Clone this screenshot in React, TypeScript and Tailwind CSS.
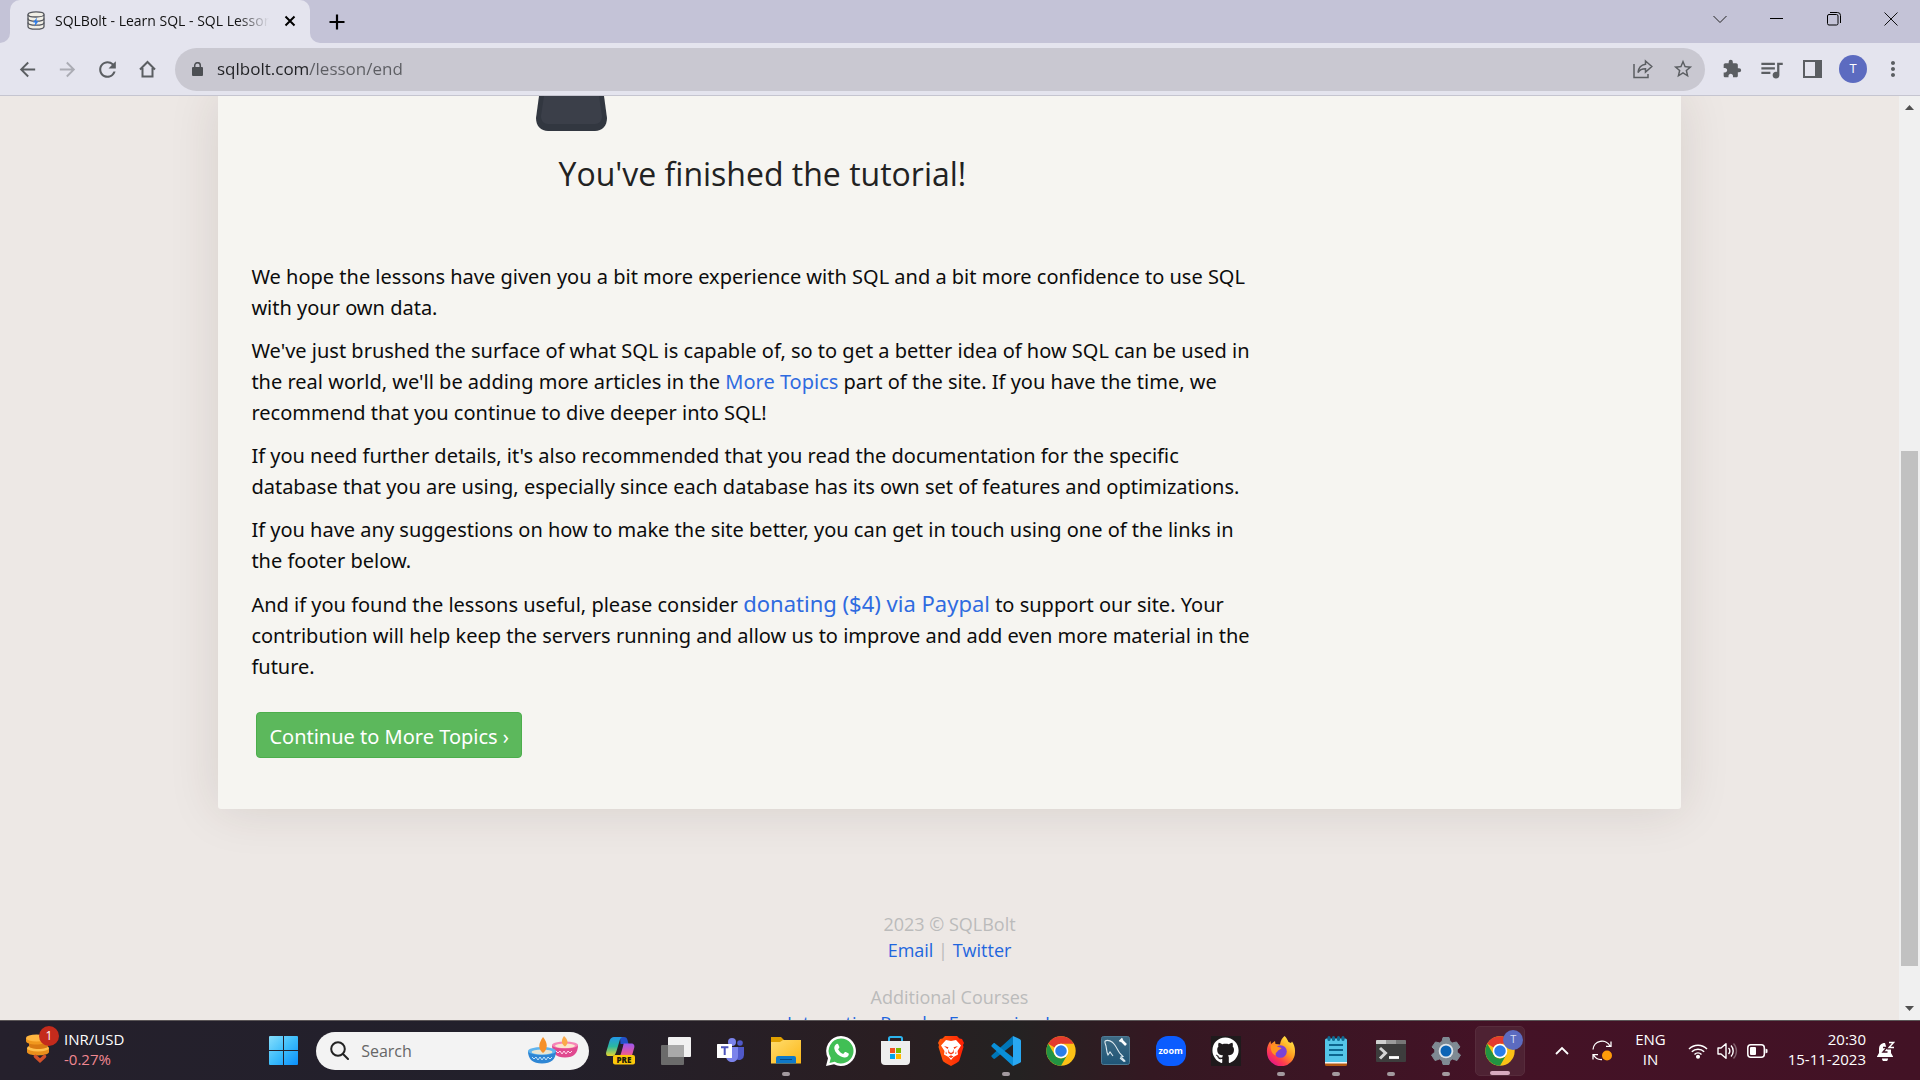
import React from "react";
import { MdArrowBack, MdArrowForward, MdRefresh, MdStarBorder, MdExtension, MdQueueMusic, MdMoreVert } from "react-icons/md";
import { FaGithub } from "react-icons/fa";

function DatabaseIcon() {
  return (
    <svg width="18" height="19" viewBox="0 0 18 19" fill="#f1efe6" stroke="#55575e" strokeWidth="1.3">
      <path d="M1 3.5v12c0 1.5 3.5 2.7 8 2.7s8-1.2 8-2.7v-12" />
      <ellipse cx="9" cy="3.4" rx="8" ry="2.6" />
      <path d="M1 7.5c0 1.5 3.5 2.7 8 2.7s8-1.2 8-2.7M1 11.5c0 1.5 3.5 2.7 8 2.7s8-1.2 8-2.7" fill="none" />
      <path d="M10 6.500l-4 5h2.300l-.8 4 4-5.300H9.300z" fill="#2a7bea" stroke="none" />
    </svg>
  );
}

function ChromeLogo() {
  return (
    <svg width="30" height="30" viewBox="0 0 48 48">
      <circle cx="24" cy="24" r="23.5" fill="#fbc116" />
      <path d="M3.6 12.3A23.5 23.5 0 0 1 44.4 12.3H24a11.7 11.7 0 0 0-10.2 5.9z" fill="#e33b2e" />
      <path d="M3.6 12.3A23.5 23.5 0 0 0 24 47.5l10.2-17.6A11.7 11.7 0 0 1 13.8 29.9z" fill="#229342" />
      <circle cx="24" cy="24" r="11.7" fill="#fff" />
      <circle cx="24" cy="24" r="9.2" fill="#2b7de9" />
    </svg>
  );
}

function CoinsIcon() {
  return (
    <svg width="24" height="30" viewBox="0 0 24 30">
      <path d="M1 14v4c0 2 5 3.4 11 3.4S23 20 23 18v-4z" fill="#e9901b" />
      <ellipse cx="12" cy="14" rx="11" ry="3.6" fill="#ffc04d" />
      <path d="M3 9v3c0 1.600 4 3 9.500 3S22 13.600 22 12V9z" fill="#d97a12" />
      <path d="M0 4v3c0 2 4 3.500 10 3.500S21 9 21 7V4z" fill="#f0981e" />
      <ellipse cx="10.500" cy="4" rx="10.500" ry="3.400" fill="#ffb640" />
      <path d="M9.500 22.500l4.500 4 4.500-4" fill="none" stroke="#d2502a" strokeWidth="3.600" strokeLinecap="round" />
    </svg>
  );
}

function StartIcon() {
  return (
    <svg width="29" height="29" viewBox="0 0 29 29">
      <defs>
        <linearGradient id="win" x1="0" y1="0" x2="1" y2="1">
          <stop offset="0" stopColor="#86defc" />
          <stop offset="0.500" stopColor="#3dbdfb" />
          <stop offset="1" stopColor="#0a8ffb" />
        </linearGradient>
      </defs>
      <path d="M1 0h13v14H0V1a1 1 0 0 1 1-1zM15 0h13a1 1 0 0 1 1 1v13H15zM0 15h14v14H1a1 1 0 0 1-1-1zM15 15h14v13a1 1 0 0 1-1 1H15z" fill="url(#win)" />
    </svg>
  );
}

function DiyaIcon() {
  return (
    <svg width="50" height="29" viewBox="0 0 50 29">
      <path d="M24 9c0 8 4 12.500 13 12.500S50 17 50 9z" fill="#e0488f" />
      <ellipse cx="37" cy="9" rx="13" ry="3.500" fill="#f685b8" />
      <ellipse cx="37" cy="9.800" rx="10" ry="2.300" fill="#fbe6cf" />
      <path d="M36 0c4.500 4 4.500 8 1 10.500C33 8 33 4 36 0z" fill="#fbaa4a" />
      <path d="M28 15l2 2 2-2 2 3 2-3 2 3 2-3 2 2 2-2" fill="none" stroke="#ffd5ea" />
      <path d="M0 15c0 8.500 5 12.500 14 12.500S28 23.500 28 15z" fill="#2e86d4" />
      <ellipse cx="14" cy="15" rx="14" ry="4" fill="#5fb4ee" />
      <ellipse cx="14" cy="16" rx="10.500" ry="2.600" fill="#e7e5d3" />
      <path d="M15 1c5 6 5 12 0 16-5-4-5-9 0-16z" fill="#f5902a" />
      <path d="M4 21l2 2 2-2 2 3 2-3 2 3 2-3 2 3 2-3 2 2 2-2" fill="none" stroke="#bfe1fa" />
    </svg>
  );
}

function CopilotIcon() {
  return (
    <svg width="30" height="28" viewBox="0 0 30 28">
      <defs>
        <linearGradient id="cpA" x1="0" y1="0" x2="0" y2="1">
          <stop offset="0" stopColor="#2397e8" /><stop offset="0.500" stopColor="#2bb8a0" /><stop offset="1" stopColor="#e6d42c" />
        </linearGradient>
        <linearGradient id="cpB" x1="0" y1="0" x2="0" y2="1">
          <stop offset="0" stopColor="#9a58f0" /><stop offset="0.600" stopColor="#e256a5" /><stop offset="1" stopColor="#f77b58" />
        </linearGradient>
      </defs>
      <path d="M14 0h4c2 0 3 1 3.500 3l1 4h-8z" fill="#2350c8" />
      <path d="M8 0h9c-2 0-3 2-3.500 4l-3 10c-1 3-2 5-4 5H3c-3 0-3.500-2-2.500-5l3-10C4.500 1 6 0 8 0z" fill="url(#cpA)" />
      <path d="M18 6.500h7c3 0 4 2 3 5l-2 7-3 3H11c2 0 3-2 4-5l2-7c.3-1.500.5-3 1-3z" fill="url(#cpB)" />
      <rect x="7" y="18" width="22" height="9.500" rx="2" fill="#fdc80a" />
      <text x="18" y="26" fontSize="8" fontWeight="800" textAnchor="middle" fill="#20180a" fontFamily="Open Sans">PRE</text>
    </svg>
  );
}

function TaskViewIcon() {
  return (
    <svg width="30" height="28" viewBox="0 0 30 28">
      <rect x="7" y="0" width="23" height="20" rx="1" fill="#f1f1f1" />
      <rect x="0" y="8" width="23" height="20" rx="1" fill="#6b6b6b" />
      <rect x="7" y="8" width="16" height="12" fill="#a9a9a9" />
    </svg>
  );
}

function TeamsIcon() {
  return (
    <svg width="28" height="26" viewBox="0 0 28 26">
      <circle cx="23" cy="5" r="2.800" fill="#5059c9" />
      <circle cx="15" cy="4" r="4" fill="#7b83eb" />
      <path d="M18 9h9v8a5 5 0 0 1-8 4z" fill="#5059c9" />
      <path d="M9 9h12v9c0 4-3 6-6 6s-6-2-6-6z" fill="#7b83eb" />
      <rect x="0" y="6" width="15" height="14" rx="0.500" fill="#fff" />
      <path d="M4 9.200h7.400M7.700 9v8" stroke="#4b53bc" strokeWidth="2" />
    </svg>
  );
}

function ExplorerIcon() {
  return (
    <svg width="30" height="27" viewBox="0 0 30 27">
      <defs>
        <linearGradient id="fold" x1="0" y1="0" x2="1" y2="1">
          <stop offset="0" stopColor="#ffdc6e" /><stop offset="1" stopColor="#fcb716" />
        </linearGradient>
      </defs>
      <path d="M0 0h10l3 3v4H0z" fill="#e0a000" />
      <path d="M0 5h9l3-2h18v23.500H0z" fill="url(#fold)" />
      <path d="M5 26.500V21a2 2 0 0 1 2-2h16a2 2 0 0 1 2 2v5.500z" fill="#0f79c8" />
      <path d="M9 22.500h12" stroke="#064a86" />
    </svg>
  );
}

function WhatsAppIcon() {
  return (
    <svg width="30" height="30" viewBox="0 0 30 30">
      <path d="M15 0a15 15 0 1 1-7 28.300L0 30l2-7.800A15 15 0 0 1 15 0z" fill="#fff" />
      <path d="M15 2.500a12.500 12.500 0 1 1-6.300 23.300L3.500 27l1.300-5A12.500 12.500 0 0 1 15 2.500z" fill="#41bf55" />
      <path d="M10.500 8c.8-.5 1.500-.3 1.800.4l1 2.400c.2.500.1.900-.2 1.300l-1 1.200c1.200 2.300 2.800 3.800 5.100 4.700l1.300-1.600c.4-.4.8-.5 1.300-.3l2.500 1.200c.5.300.6.700.5 1.300-.5 2.300-2.500 3.200-4.600 2.900-5.200-.9-9.400-5-9.900-9.300-.1-1.800.9-3.400 2.200-4.200z" fill="#fff" />
    </svg>
  );
}

function StoreIcon() {
  return (
    <svg width="29" height="29" viewBox="0 0 29 29">
      <path d="M8 6V2.500A1.500 1.500 0 0 1 9.500 1h10A1.500 1.500 0 0 1 21 2.500V6" fill="none" stroke="#2cb3ec" strokeWidth="2" />
      <path d="M0 5h29v20a4 4 0 0 1-4 4H4a4 4 0 0 1-4-4z" fill="#eeeeee" />
      <path d="M9 12h5v5H9z" fill="#f25022" /><path d="M15 12h5v5h-5z" fill="#7fba00" />
      <path d="M9 18h5v5H9z" fill="#00a4ef" /><path d="M15 18h5v5h-5z" fill="#ffb900" />
    </svg>
  );
}

function BraveIcon() {
  return (
    <svg width="26" height="30" viewBox="0 0 26 30">
      <defs>
        <linearGradient id="brv" x1="0" x2="1"><stop offset="0" stopColor="#ff5a0a" /><stop offset="1" stopColor="#ff1f05" /></linearGradient>
      </defs>
      <path d="M7 0h12l2.500 2.500L24 3l2 4-1 2 .5 2-4 13c-.5 1.500-1.500 2-3 3L13 30l-5.500-3c-1.500-1-2.500-1.500-3-3L.5 11 1 9 0 7l2-4 2.500-.5z" fill="url(#brv)" />
      <path d="M8 4l5 1 5-1 5 5.500-3.500 5.500 .5 3.500-4.500 2.500L13 24l-2.500-3-4.500-2.500.5-3.500L3 9.500z" fill="#fff" />
      <path d="M6 10l4.500 1.200L9.500 13zM20 10l-4.500 1.200 1 1.800z" fill="#fb3a12" />
      <path d="M10.500 13l.8 3L13 17l1.700-1 .8-3 .3 4L13 18.500 10.200 17z" fill="#fb3a12" />
      <path d="M8 15.500l1 2.500-1.500-.5zM18 15.500l-1 2.500 1.500-.5zM10.500 20.500l2.500-1.200 2.500 1.200-2.500 1.500z" fill="#fb3a12" />
    </svg>
  );
}

function CodeIcon() {
  return (
    <svg width="30" height="30" viewBox="0 0 30 30">
      <path d="M22 0L1 19c-.8.700-.8 1.500-.2 2.100l1.500 1.500c.6.500 1.200.5 1.800 0L22 8.500z" fill="#0076b8" />
      <path d="M22 30L1 11c-.8-.7-.8-1.500-.2-2.100l1.500-1.500c.6-.5 1.200-.5 1.800 0L22 21.500z" fill="#0a8fd8" />
      <path d="M22 0l7 3.200c.6.300 1 .9 1 1.600v20.400c0 .7-.4 1.300-1 1.600L22 30z" fill="#29a8f2" />
    </svg>
  );
}

function WorkbenchIcon() {
  return (
    <svg width="29" height="29" viewBox="0 0 29 29">
      <defs><linearGradient id="wb" x1="0" y1="0" x2="0" y2="1"><stop offset="0" stopColor="#3f6b84" /><stop offset="1" stopColor="#1f5577" /></linearGradient></defs>
      <rect x="0.500" y="0.500" width="28" height="28" rx="2" fill="url(#wb)" stroke="#4d7a94" />
      <path d="M4 5c3-1.500 7 0 9.500 3.500C16 12 17 15 19 17.500l3 3-2 .5 4 4M4 5c-.5 2 .5 3 1 5 .5 2.500.5 6 2 9l2-3 3 4M19 22l4 3.500 1.500-.5" fill="none" stroke="#dce8ee" strokeWidth="1.100" />
      <path d="M20.500 4.500l4.500 4.500" stroke="#fff" strokeWidth="2.600" />
      <path d="M18.500 5.500l3-3" stroke="#fff" strokeWidth="1.800" fill="none" />
    </svg>
  );
}

function ZoomIcon() {
  return (
    <span className="flex size-[30px] items-center justify-center rounded-[12px] bg-[#0b5cff] text-[9px] leading-none font-bold text-white">zoom</span>
  );
}

function FirefoxIcon() {
  return (
    <svg width="30" height="30" viewBox="0 0 30 30">
      <defs>
        <linearGradient id="ffx" x1="0.900" y1="0.050" x2="0.200" y2="0.950"><stop offset="0" stopColor="#fff04a" /><stop offset="0.450" stopColor="#ff9a1f" /><stop offset="0.750" stopColor="#ff3c4e" /><stop offset="1" stopColor="#e3158a" /></linearGradient>
      </defs>
      <path d="M18.500 0c1.500 1 3 3.500 4 6l2.500 1 1-1.500c2 3 3.300 6.500 3 10.500A14 14 0 0 1 1 16.500C.5 12 2 8 4.500 5l.5 3 4-3 .5 3 4.500.5c.5-4 2.500-7 4.500-8.500z" fill="url(#ffx)" />
      <circle cx="14.500" cy="15.500" r="6.300" fill="#7b41d8" />
      <path d="M5 9c3-.5 5 .5 7 2 2 .3 3 .7 3.500 1.500-2 1-3.500 1.500-4.500 3.500-1 .5-2 1.500-1 3.500-4-1-6-6-5-10.500z" fill="#ff9320" />
    </svg>
  );
}

function NotepadIcon() {
  return (
    <svg width="22" height="30" viewBox="0 0 22 30">
      <path d="M0 27h22v1.500a1.500 1.500 0 0 1-1.500 1.500h-19A1.500 1.500 0 0 1 0 28.500z" fill="#b55a12" />
      <path d="M0 25h22v2.500H0z" fill="#f4f4f4" />
      <path d="M0 4a1.500 1.500 0 0 1 1.500-1.500h19A1.500 1.500 0 0 1 22 4v22H0z" fill="#54c5e8" />
      <g fill="#0f6d95"><rect x="2.500" y="0" width="3" height="5" rx="1.500" /><rect x="7" y="0" width="3" height="5" rx="1.500" /><rect x="12" y="0" width="3" height="5" rx="1.500" /><rect x="16.500" y="0" width="3" height="5" rx="1.500" /></g>
      <path d="M4 9h14M4 14h14M4 19h14" stroke="#0c668f" strokeWidth="1.800" />
    </svg>
  );
}

function TerminalIcon() {
  return (
    <svg width="30" height="22" viewBox="0 0 30 22">
      <rect width="30" height="22" rx="1" fill="#3d3d3d" />
      <path d="M0 1a1 1 0 0 1 1-1h9v4H0z" fill="#d0d0d0" /><path d="M10 0h10v4H10z" fill="#9b9b9b" /><path d="M20 0h9a1 1 0 0 1 1 1v3H20z" fill="#777" />
      <path d="M4 8l5.500 5L4 18.500" fill="none" stroke="#d6d6d6" strokeWidth="3" />
      <path d="M13 17.500h10" stroke="#fff" strokeWidth="2.800" />
    </svg>
  );
}

function SettingsIcon() {
  return (
    <svg width="30" height="28" viewBox="0 0 30 28">
      <path d="M12 .5l6 0 1 4 2.500 1.400L25.500 5 29 10l-2.800 2.800v2.400L29.500 18 26 23.500 21.500 22 19 23.500 18 27.500h-6l-1-4L8.500 22 4 23.500.5 18l3.300-2.800v-2.400L1 10l3.500-5 4 .9L11 4.500z" fill="#7f8a93" stroke="#7f8a93" strokeLinejoin="round" />
      <circle cx="15" cy="14" r="7.300" fill="#dfe5ea" />
      <circle cx="15" cy="14" r="5.500" fill="#0b64b5" />
    </svg>
  );
}

function GithubIcon() {
  return <span className="flex size-[30px] items-center justify-center bg-[#1f1a1c]"><FaGithub size={27} color="#fff" /></span>;
}

const apps: { name: string; icon: React.ReactNode; running?: boolean }[] = [
  { name: "Copilot", icon: <CopilotIcon /> },
  { name: "Task view", icon: <TaskViewIcon /> },
  { name: "Teams", icon: <TeamsIcon /> },
  { name: "File Explorer", icon: <ExplorerIcon />, running: true },
  { name: "WhatsApp", icon: <WhatsAppIcon /> },
  { name: "Microsoft Store", icon: <StoreIcon /> },
  { name: "Brave", icon: <BraveIcon /> },
  { name: "Visual Studio Code", icon: <CodeIcon />, running: true },
  { name: "Chrome", icon: <ChromeLogo /> },
  { name: "MySQL Workbench", icon: <WorkbenchIcon /> },
  { name: "Zoom", icon: <ZoomIcon /> },
  { name: "GitHub Desktop", icon: <GithubIcon /> },
  { name: "Firefox", icon: <FirefoxIcon />, running: true },
  { name: "Notepad", icon: <NotepadIcon />, running: true },
  { name: "Terminal", icon: <TerminalIcon />, running: true },
  { name: "Settings", icon: <SettingsIcon />, running: true },
];

function TabStrip() {
  return (
    <header className="flex h-[43px] shrink-0 bg-[#c4c3d7]">
      <div className="w-[10px] bg-[#e4e4ee]"><div className="h-full rounded-br-[10px] bg-[#c4c3d7]" /></div>
      <div className="flex w-[300px] items-center rounded-t-[10px] bg-[#e4e4ee] pb-[2px] pl-[17px]">
        <DatabaseIcon />
        <span className="ml-[10px] w-[214px] overflow-hidden mask-r-from-85% text-[14px] whitespace-nowrap text-[#111]">SQLBolt - Learn SQL - SQL Lessons</span>
        <button aria-label="Close tab" className="ml-[15px]"><svg width="12" height="12" viewBox="0 0 12 12" stroke="#000" strokeWidth="2"><path d="M1.500 1.500l9 9M10.500 1.500l-9 9" /></svg></button>
      </div>
      <div className="w-[10px] bg-[#e4e4ee]"><div className="h-full rounded-bl-[10px] bg-[#c4c3d7]" /></div>
      <button aria-label="New tab" className="ml-[9px]"><svg width="16" height="16" viewBox="0 0 16 16" stroke="#000" strokeWidth="2.200"><path d="M8 .5v15M.5 8h15" /></svg></button>
      <div className="ml-auto flex items-center pb-[6px]">
        <button aria-label="Search tabs" className="flex w-[57px] justify-center"><svg width="14" height="14" viewBox="0 0 14 14" fill="none" stroke="#222"><path d="M.5 4l6.500 6.500L13.500 4" /></svg></button>
        <button aria-label="Minimize" className="flex w-[57px] justify-center"><svg width="13" height="13" viewBox="0 0 13 13" stroke="#000"><path d="M0 6.500h13" /></svg></button>
        <button aria-label="Restore" className="flex w-[57px] justify-center"><svg width="14" height="14" viewBox="0 0 14 14" fill="none" stroke="#000"><rect x="0.500" y="2.500" width="10.500" height="10.500" rx="1.500" /><path d="M3 .5h7.500a3 3 0 0 1 3 3V11" /></svg></button>
        <button aria-label="Close window" className="flex w-[58px] justify-center"><svg width="14" height="14" viewBox="0 0 14 14" stroke="#111"><path d="M.5 .5l13 13M13.500 .5l-13 13" /></svg></button>
      </div>
    </header>
  );
}

function Toolbar() {
  return (
    <nav className="flex h-[53px] shrink-0 items-center border-b border-[#c5c5d0] bg-[#e4e4ee] text-[#5b5e62]">
      <button aria-label="Back" className="ml-4"><MdArrowBack size={23} /></button>
      <button aria-label="Forward" className="ml-[17px] text-[#abacb4]"><MdArrowForward size={23} /></button>
      <button aria-label="Reload" className="ml-[16px]"><MdRefresh size={25} /></button>
      <button aria-label="Home" className="ml-[19px]"><svg width="17" height="18" viewBox="0 0 17 18" fill="none" stroke="currentColor" strokeWidth="2"><path d="M1 9.500L8.500 2 16 9.500M3.500 8v8.500h10V8" /></svg></button>
      <div className="ml-[19px] flex h-[43px] flex-1 items-center rounded-full bg-[#c9c8d1]">
        <svg className="ml-[17px]" width="11" height="14" viewBox="0 0 11 14"><rect y="5" width="11" height="9" rx="1" fill="#4c4f53" /><path d="M2.700 6V3.500a2.800 2.800 0 0 1 5.600 0V6" fill="none" stroke="#4c4f53" strokeWidth="1.500" /></svg>
        <input
          aria-label="Address"
          className="ml-[14px] min-w-0 flex-1 bg-[linear-gradient(90deg,#202124_93px,#5c5d62_93px)] bg-clip-text text-[17px] text-transparent outline-none"
          defaultValue="sqlbolt.com/lesson/end"
        />
        <button aria-label="Share" className="mr-[19px]"><svg width="20" height="20" viewBox="0 0 20 20" fill="none" stroke="currentColor" strokeWidth="1.500"><path d="M1 5v13.500h14V15" /><path d="M12.500 2l6.300 5.500-6.300 5.500V9.800C9 9.800 6.500 11 5 13.500c.5-4.500 3-7.500 7.500-8.200z" /></svg></button>
        <button aria-label="Bookmark" className="mr-[11px]"><MdStarBorder size={22} /></button>
      </div>
      <button aria-label="Extensions" className="ml-[17px]"><MdExtension size={20} /></button>
      <button aria-label="Media" className="ml-[16px]"><MdQueueMusic size={27} /></button>
      <button aria-label="Side panel" className="ml-[18px]"><svg width="19" height="18" viewBox="0 0 19 18"><rect x="1" y="1" width="17" height="16" fill="none" stroke="currentColor" strokeWidth="2" /><path d="M12 1h6v16h-6z" fill="currentColor" /></svg></button>
      <button aria-label="Profile" className="ml-[17px] size-[28px] rounded-full bg-[#5c6bc0] text-[13px] text-white">T</button>
      <button aria-label="Menu" className="mr-[15px] ml-[14px]"><MdMoreVert size={24} /></button>
    </nav>
  );
}

function Article() {
  return (
    <article className="mx-auto w-[77%] rounded-b-[3px] bg-[#f6f5f1] pb-[51px] font-['Noto_Sans','Open_Sans',sans-serif] text-[20px] leading-[31px] text-[#0c0c0c] shadow-[0_0_50px_rgba(60,40,30,0.13)]">
      <div className="max-w-[1088px] px-[33px]">
        <svg className="ml-[285px]" width="71" height="36" viewBox="0 0 71 36">
          <path d="M3 0h65l3 22c0 8-5 13-12 13H12C5 35 0 30 0 22z" fill="#323740" />
          <path d="M8 0h55l3 20c0 5-3 8-7 8H12c-4 0-7-3-7-8z" fill="#3b3f49" />
        </svg>
        <h1 className="mt-[20px] text-center font-['Open_Sans','Noto_Sans',sans-serif] text-[32px] leading-[44px] text-[#222]">You've finished the tutorial!</h1>
        <div className="mt-[65px] flex max-w-[1016px] flex-col gap-3">
          <p>We hope the lessons have given you a bit more experience with SQL and a bit more confidence to use SQL with your own data.</p>
          <p>We've just brushed the surface of what SQL is capable of, so to get a better idea of how SQL can be used in the real world, we'll be adding more articles in the <a href="#topics" className="text-[#2f6be0]">More Topics</a> part of the site. If you have the time, we recommend that you continue to dive deeper into SQL!</p>
          <p>If you need further details, it's also recommended that you read the documentation for the specific database that you are using, especially since each database has its own set of features and optimizations.</p>
          <p>If you have any suggestions on how to make the site better, you can get in touch using one of the links in the footer below.</p>
          <p>And if you found the lessons useful, please consider <a href="#donate" className="text-[22px] text-[#2f6be0]">donating ($4) via Paypal</a> to support our site. Your contribution will help keep the servers running and allow us to improve and add even more material in the future.</p>
        </div>
        <button className="mt-[30px] ml-[5px] h-[46px] rounded-[4px] border border-[#4cae4c] bg-[#5cb85c] px-[12px] pt-[3px] text-white">Continue to More Topics ›</button>
      </div>
    </article>
  );
}

function Taskbar() {
  return (
    <footer className="flex h-[60px] shrink-0 items-center border-t border-[#5b5657] bg-[linear-gradient(90deg,#25202c_0%,#22202b_27%,#2a1e22_46%,#242222_53%,#341822_60%,#441226_78%,#421225_100%)] text-white">
      <button className="relative flex items-center pb-[3px] pl-[26px] text-left">
        <CoinsIcon />
        <span className="absolute -top-[3px] left-[39px] flex size-[20px] items-center justify-center rounded-full bg-[#c42b1c] text-[12px]">1</span>
        <span className="ml-[14px] text-[15px] leading-[20px]">INR/USD<br /><span className="text-[#f08791]">-0.27%</span></span>
      </button>
      <button aria-label="Start" className="ml-auto"><StartIcon /></button>
      <label className="ml-[18px] flex h-[38px] w-[273px] items-center rounded-full bg-[#f3f3f3] pr-[11px] pl-[14px]">
        <svg className="shrink-0" width="19" height="19" viewBox="0 0 19 19" fill="none" stroke="#222" strokeWidth="2"><circle cx="8" cy="8" r="6.800" /><path d="M13 13l5 5" strokeLinecap="round" /></svg>
        <input aria-label="Search" placeholder="Search" className="ml-3 w-0 flex-1 text-[16px] text-black outline-none placeholder:text-[#666]" />
        <DiyaIcon />
      </label>
      <div className="ml-[4px] flex">
        {apps.map((a) => (
          <button key={a.name} aria-label={a.name} className="relative flex h-[50px] w-[55px] items-center justify-center">
            {a.icon}
            {a.running && <span className="absolute bottom-0 h-[4px] w-[8px] rounded-full bg-[#a39a9f]" />}
          </button>
        ))}
        <button aria-label="Chrome profile" className="relative ml-[2px] flex h-[50px] w-[50px] items-center justify-center rounded-[5px] border border-[#572c3c] bg-[#4e2233]">
          <ChromeLogo />
          <span className="absolute top-[3px] right-[1px] flex size-[20px] items-center justify-center rounded-full bg-[#5c6bc0] text-[11px] text-[#d7dbf2]">T</span>
          <span className="absolute bottom-0 h-[4px] w-[20px] rounded-full bg-[#d9a9be]" />
        </button>
      </div>
      <button aria-label="Hidden icons" className="ml-[30px]"><svg width="14" height="9" viewBox="0 0 14 9" fill="none" stroke="#fff" strokeWidth="1.800"><path d="M1 8l6-6 6 6" /></svg></button>
      <button aria-label="Update" className="ml-[23px]"><svg width="21" height="21" viewBox="0 0 21 21" fill="none" stroke="#fff" strokeWidth="1.300"><path d="M1 9.500A9 9 0 0 1 18 6M19 1.500V6.300H14M1 19.500V14.700h5M1.500 15A9 9 0 0 0 10 19.500" /><circle cx="15" cy="15.500" r="5" fill="#ff9b0a" stroke="none" /></svg></button>
      <span className="ml-[22px] pb-[3px] text-center text-[15px] leading-[20px]">ENG<br />IN</span>
      <button aria-label="Quick settings" className="ml-[22px] flex items-center gap-[9px]">
        <svg width="20" height="16" viewBox="0 0 20 16" fill="none" stroke="#fff" strokeWidth="1.500"><path d="M1 6a12.500 12.500 0 0 1 18 0M3.800 8.800a8.800 8.800 0 0 1 12.400 0M6.500 11.500a5 5 0 0 1 7 0" /><circle cx="10" cy="13.800" r="1.300" fill="#fff" /></svg>
        <svg width="21" height="18" viewBox="0 0 21 18" fill="none" stroke="#fff" strokeWidth="1.400"><path d="M1 6v6h3l5 4.300V1.700L4 6z" strokeLinejoin="round" /><path d="M11.500 6a4 4 0 0 1 0 6M14 3.500a8 8 0 0 1 0 11" /><path d="M16.500 1.500a11 11 0 0 1 0 15" stroke="#80606c" /></svg>
        <svg width="21" height="14" viewBox="0 0 21 14"><rect x="0.800" y="0.800" width="16.500" height="12.400" rx="3" fill="none" stroke="#fff" strokeWidth="1.500" /><rect x="3" y="3" width="6" height="8" rx="1" fill="#fff" /><path d="M18.500 4.500l2 1v3l-2 1z" fill="#fff" /></svg>
      </button>
      <button className="ml-[20px] pb-[3px] text-right text-[15px] leading-[20px]">20:30<br />15-11-2023</button>
      <button aria-label="Notifications" className="mr-[25px] ml-[11px]"><svg width="18" height="20" viewBox="0 0 18 20" fill="#fff"><path d="M8 2c-4 0-6 2.500-6 6v4L0 15.500V16h16v-.5L14 12V8.500h-4z" /><path d="M5 17.500h6a3 3 0 0 1-6 0z" /><path d="M12 1.500h4.500l-4.500 5h5" fill="none" stroke="#fff" strokeWidth="1.400" /><path d="M6 6.500h4l-4 4.500h4.500" fill="none" stroke="#421225" strokeWidth="1.400" /></svg></button>
    </footer>
  );
}

export default function App() {
  return (
    <div className="flex h-screen flex-col overflow-hidden font-['Open_Sans','Noto_Sans',sans-serif]">
      <TabStrip />
      <Toolbar />
      <div className="flex min-h-0 flex-1 bg-[#ede8e5]">
        <main className="min-w-0 flex-1 overflow-hidden">
          <Article />
          <div className="mt-[102px] text-center text-[18px] leading-[26px] text-[#bbb]">
            <p>2023 © SQLBolt<br /><a href="#email" className="text-[#1f66de]">Email</a> | <a href="#twitter" className="text-[#1f66de]">Twitter</a></p>
            <p className="mt-[21px]">Additional Courses<br /><a href="#regex" className="text-[#1f66de]">Interactive Regular Expression Lessons</a></p>
          </div>
        </main>
        <div className="flex w-[21px] flex-col items-center bg-[#f0f0f0] py-[9px]">
          <svg width="9" height="5" viewBox="0 0 9 5" fill="#505050"><path d="M0 5L4.500 0 9 5z" /></svg>
          <div className="mt-[341px] mb-[40px] w-[17px] flex-1 bg-[#c1c1c1]" />
          <svg width="9" height="5" viewBox="0 0 9 5" fill="#505050"><path d="M0 0h9L4.500 5z" /></svg>
        </div>
      </div>
      <Taskbar />
    </div>
  );
}
